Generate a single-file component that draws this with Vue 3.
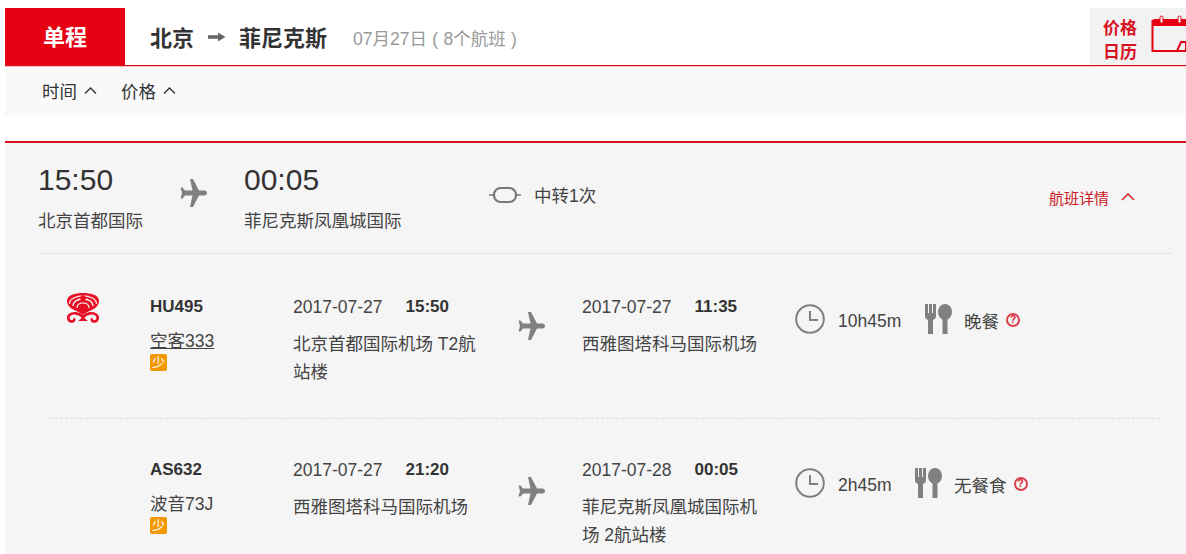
<template>
  <div class="page">
    <div class="head">
      <div class="trip-tab">单程</div>
      <div class="route">
        <span class="city">北京</span>
        <svg class="route-arrow" viewBox="0 0 18 10" width="18" height="10">
          <path d="M0 3.200h10V0.500L17.500 5 10 9.500V6.800H0z" fill="#666" />
        </svg>
        <span class="city">菲尼克斯</span>
        <span class="date">07月27日 ( 8个航班 )</span>
      </div>
      <div class="cal-btn">
        <div class="cal-text">价格<br />日历</div>
        <svg class="cal-icon" viewBox="0 0 50 40" width="50" height="40">
          <rect x="1.500" y="6" width="45" height="30" fill="#f2f2f2" stroke="#e60012" stroke-width="2" />
          <path d="M1 11V7q0-3 3-3h40q3 0 3 3v4z" fill="#e60012" />
          <rect x="9" y="1" width="3" height="7" rx="1.500" fill="#f2f2f2" stroke="#e60012" stroke-width="1" />
          <rect x="27" y="1" width="3" height="7" rx="1.500" fill="#f2f2f2" stroke="#e60012" stroke-width="1" />
          <path d="M26 36l4-9h8M35 27v9" fill="none" stroke="#e60012" stroke-width="2" />
        </svg>
      </div>
    </div>

    <div class="sort-bar">
      <span class="sort" v-for="s in sorts" :key="s">
        {{ s }}
        <svg viewBox="0 0 13 7" width="13" height="7"><path d="M1 6.500l5.500-5.500 5.500 5.500" fill="none" stroke="#333" stroke-width="1.400" /></svg>
      </span>
    </div>

    <div class="card">
      <div class="summary">
        <div class="sum-col sum-from">
          <div class="sum-time">15:50</div>
          <div class="sum-name">北京首都国际</div>
        </div>
        <svg class="sum-plane" viewBox="0 0 28 28" width="28" height="28">
          <path :d="planePath" fill="#808080" />
        </svg>
        <div class="sum-col sum-to">
          <div class="sum-time">00:05</div>
          <div class="sum-name">菲尼克斯凤凰城国际</div>
        </div>
        <svg class="stop-icon" viewBox="0 0 32 20" width="32" height="20">
          <path d="M0 10h4M28 10h4" stroke="#777" stroke-width="1.400" />
          <rect x="5" y="3" width="22" height="14" rx="6.500" fill="none" stroke="#777" stroke-width="2.200" />
        </svg>
        <span class="stop-text">中转1次</span>
        <span class="detail-link">
          航班详情
          <svg viewBox="0 0 14 8" width="14" height="8"><path d="M1 7l6-6 6 6" fill="none" stroke="#c9151e" stroke-width="1.400" /></svg>
        </span>
      </div>

      <div class="segments">
        <div class="segment" v-for="seg in segments" :key="seg.no">
          <div class="logo-col">
            <svg v-if="seg.logo" viewBox="0 0 36 32" width="36" height="32">
              <path d="M18 23C12 18 2 17 2 9 2 3 10 1 18 1s16 2 16 8c0 8-10 9-16 14z" fill="#e60f24" />
              <path d="M4.500 12c0-5 6-8 13.500-8s13.500 3 13.500 8" fill="none" stroke="#fbd0d4" stroke-width="1.400" />
              <path d="M8 14c0-4 4-7 10-7s10 3 10 7" fill="none" stroke="#fff" stroke-width="1.400" />
              <path d="M12 16c0-3 2-5 6-5s6 2 6 5" fill="none" stroke="#fff" stroke-width="1.200" />
              <circle cx="18" cy="6" r="2.800" fill="#e60f24" />
              <path d="M18 25C14 21 8 20 4.500 23c-2.500 2.500-1 6.500 2.500 6.500 2 0 3-2 1.500-3M18 25c4-4 10-5 13.500-2 2.500 2.500 1 6.500-2.500 6.500-2 0-3-2-1.500-3" fill="none" stroke="#e60f24" stroke-width="2.600" />
              <path d="M18 24c-2 2-3 4-5 5h10c-2-1-3-3-5-5z" fill="#e60f24" />
            </svg>
          </div>
          <div class="flight-col">
            <div class="flight-no">{{ seg.no }}</div>
            <div class="plane-type" :class="{ linked: seg.logo }">{{ seg.plane }}</div>
            <div class="few-badge">少</div>
          </div>
          <div class="stop-col">
            <div class="date-line"><span>{{ seg.depDate }}</span><b>{{ seg.depTime }}</b></div>
            <div class="airport">{{ seg.depName }}</div>
          </div>
          <svg class="seg-plane" viewBox="0 0 28 28" width="28" height="28">
            <path :d="planePath" fill="#808080" />
          </svg>
          <div class="stop-col">
            <div class="date-line"><span>{{ seg.arrDate }}</span><b>{{ seg.arrTime }}</b></div>
            <div class="airport">{{ seg.arrName }}</div>
          </div>
          <div class="extras">
            <svg class="clock" viewBox="0 0 30 30" width="30" height="30">
              <circle cx="15" cy="15" r="13.800" fill="none" stroke="#808080" stroke-width="2" />
              <path d="M15 7v9h8" fill="none" stroke="#808080" stroke-width="2" />
            </svg>
            <span class="duration" :style="{ width: seg.durWidth + 'px' }">{{ seg.duration }}</span>
            <svg class="meal" viewBox="0 0 28 30" width="28" height="30">
              <path d="M1 0h3v9h1V0h3v9h1V0h3v12c0 2-1 3-3 4v14H4V16c-2-1-3-2-3-4z" fill="#808080" />
              <ellipse cx="21" cy="8" rx="7" ry="8" fill="#808080" />
              <rect x="18.500" y="12" width="5" height="18" fill="#808080" />
            </svg>
            <span class="meal-text">{{ seg.meal }}</span>
            <span class="help">?</span>
          </div>
        </div>
      </div>
    </div>
  </div>
</template>

<script setup>
const sorts = ['时间', '价格']

const planePath = 'M11 0h3l6 11.500h5.500c1.500 0 2.500 1.200 2.500 2.500s-1 2.500-2.500 2.500H20L14 28h-3l2.500-11.500H6L3.500 19.500h-2L3 14 1.500 8.500h2L6 11.500h7.500z'

const segments = [
  {
    no: 'HU495',
    logo: true,
    plane: '空客333',
    depDate: '2017-07-27',
    depTime: '15:50',
    depName: '北京首都国际机场 T2航站楼',
    arrDate: '2017-07-27',
    arrTime: '11:35',
    arrName: '西雅图塔科马国际机场',
    duration: '10h45m',
    durWidth: 99,
    meal: '晚餐'
  },
  {
    no: 'AS632',
    logo: false,
    plane: '波音73J',
    depDate: '2017-07-27',
    depTime: '21:20',
    depName: '西雅图塔科马国际机场',
    arrDate: '2017-07-28',
    arrTime: '00:05',
    arrName: '菲尼克斯凤凰城国际机场 2航站楼',
    duration: '2h45m',
    durWidth: 89,
    meal: '无餐食'
  }
]
</script>

<style>
html, body {
  margin: 0;
  background: #fff;
  overflow: hidden;
}
</style>

<style scoped>
.page {
  width: 1186px;
  height: 554px;
  overflow: hidden;
  padding: 8px 0 0 5px;
  box-sizing: border-box;
  font-family: "Liberation Sans", "Noto Sans CJK SC", sans-serif;
  color: #333;
  font-size: 17.5px;
}

.head {
  display: flex;
  height: 57px;
  border-bottom: 1px solid #d9121f;
  box-shadow: 0 1px 0 #f5b8bc;
}
.trip-tab {
  width: 120px;
  background: #e60012;
  color: #fff;
  font-size: 22px;
  font-weight: 700;
  line-height: 60px;
  height: 57px;
  text-align: center;
}
.route {
  flex: 1;
  display: flex;
  align-items: center;
  padding-left: 25px;
  padding-bottom: 1px;
}
.city {
  font-size: 22px;
  font-weight: 700;
  color: #333;
}
.route-arrow {
  margin: 1px 13px 0 14px;
}
.date {
  margin-left: 26px;
  margin-top: 2px;
  word-spacing: 0.5px;
  color: #999;
}
.cal-btn {
  width: 96px;
  background: #f2f2f2;
  display: flex;
  align-items: center;
  overflow: hidden;
  padding-left: 13px;
  box-sizing: border-box;
}
.cal-text {
  color: #d9121f;
  font-size: 17px;
  font-weight: 700;
  line-height: 24px;
  flex: none;
  margin-top: 9px;
}
.cal-icon {
  flex: none;
  margin-left: 14px;
  margin-top: -3px;
}

.sort-bar {
  height: 48px;
  margin-top: 2px;
  background: #f9f9f9;
  display: flex;
  align-items: center;
  gap: 24px;
  padding: 0 0 4px 37px;
  box-sizing: border-box;
}
.sort {
  display: flex;
  align-items: center;
  gap: 7px;
  color: #333;
}

.card {
  margin-top: 25px;
  border-top: 2px solid #d9121f;
  background: #f5f5f5;
  height: 420px;
  padding: 0 14px 0 33px;
}
.summary {
  height: 110px;
  border-bottom: 1px solid #e4e4e4;
  display: flex;
  align-items: center;
  position: relative;
}
.sum-col {
  margin-top: -2px;
}
.sum-time {
  font-size: 30px;
  line-height: 36px;
  color: #333;
}
.sum-name {
  margin-top: 11px;
  line-height: 24px;
  color: #444;
}
.sum-from {
  width: 141px;
}
.sum-plane {
  flex: none;
  margin-top: -10px;
}
.sum-to {
  width: 245px;
  margin-left: 37px;
}
.stop-icon {
  flex: none;
  margin-top: -7px;
}
.stop-text {
  margin-left: 13px;
  margin-top: -7px;
  color: #444;
}
.detail-link {
  margin-left: auto;
  margin-right: 37px;
  margin-top: -2px;
  display: flex;
  align-items: center;
  gap: 12px;
  font-size: 15px;
  color: #c9151e;
}
.detail-link svg {
  margin-top: -1px;
}

.segments {
  margin-left: 12px;
  margin-right: 12px;
}
.segment {
  display: flex;
  align-items: flex-start;
  height: 164px;
  padding-top: 43px;
  box-sizing: border-box;
}
.segment + .segment {
  border-top: 1px dashed #ddd;
  padding-top: 41px;
}
.logo-col {
  width: 100px;
  padding-left: 15px;
  box-sizing: border-box;
  flex: none;
  margin-top: -5px;
}
.flight-col {
  width: 143px;
  flex: none;
}
.flight-no {
  font-size: 17px;
  font-weight: 700;
  line-height: 20px;
  color: #333;
}
.plane-type {
  margin-top: 14px;
  line-height: 21px;
  color: #444;
}
.plane-type.linked {
  text-decoration: underline;
}
.few-badge {
  width: 17px;
  height: 17px;
  margin-top: 2px;
  background: #f39800;
  border-radius: 2px;
  color: #fff;
  font-size: 13px;
  line-height: 17px;
  text-align: center;
}
.stop-col {
  width: 185px;
  flex: none;
}
.date-line {
  display: flex;
  gap: 23px;
  line-height: 20px;
  color: #444;
}
.date-line b {
  color: #333;
  font-size: 17px;
}
.airport {
  margin-top: 13px;
  line-height: 28px;
  color: #444;
}
.seg-plane {
  flex: none;
  margin: 15px 37px 0 39px;
}
.stop-col + .seg-plane + .stop-col {
  width: 212px;
  padding-right: 27px;
  box-sizing: border-box;
}
.extras {
  display: flex;
  align-items: center;
  margin-top: 7px;
  margin-left: 1px;
}
.segment + .segment .extras {
  margin-top: 8px;
}
.segment + .segment .seg-plane {
  margin-top: 17px;
}
.clock {
  flex: none;
}
.duration {
  padding-left: 13px;
  margin-top: 4px;
  box-sizing: border-box;
  flex: none;
  color: #444;
}
.meal {
  flex: none;
}
.meal-text {
  margin-left: 12px;
  margin-top: 2px;
  color: #444;
}
.help {
  width: 14px;
  height: 14px;
  margin-left: 7px;
  margin-top: 2px;
  border: 2px solid #d9424f;
  border-radius: 50%;
  box-sizing: border-box;
  color: #d9121f;
  font-size: 10px;
  font-weight: 700;
  line-height: 10px;
  text-align: center;
}
</style>
